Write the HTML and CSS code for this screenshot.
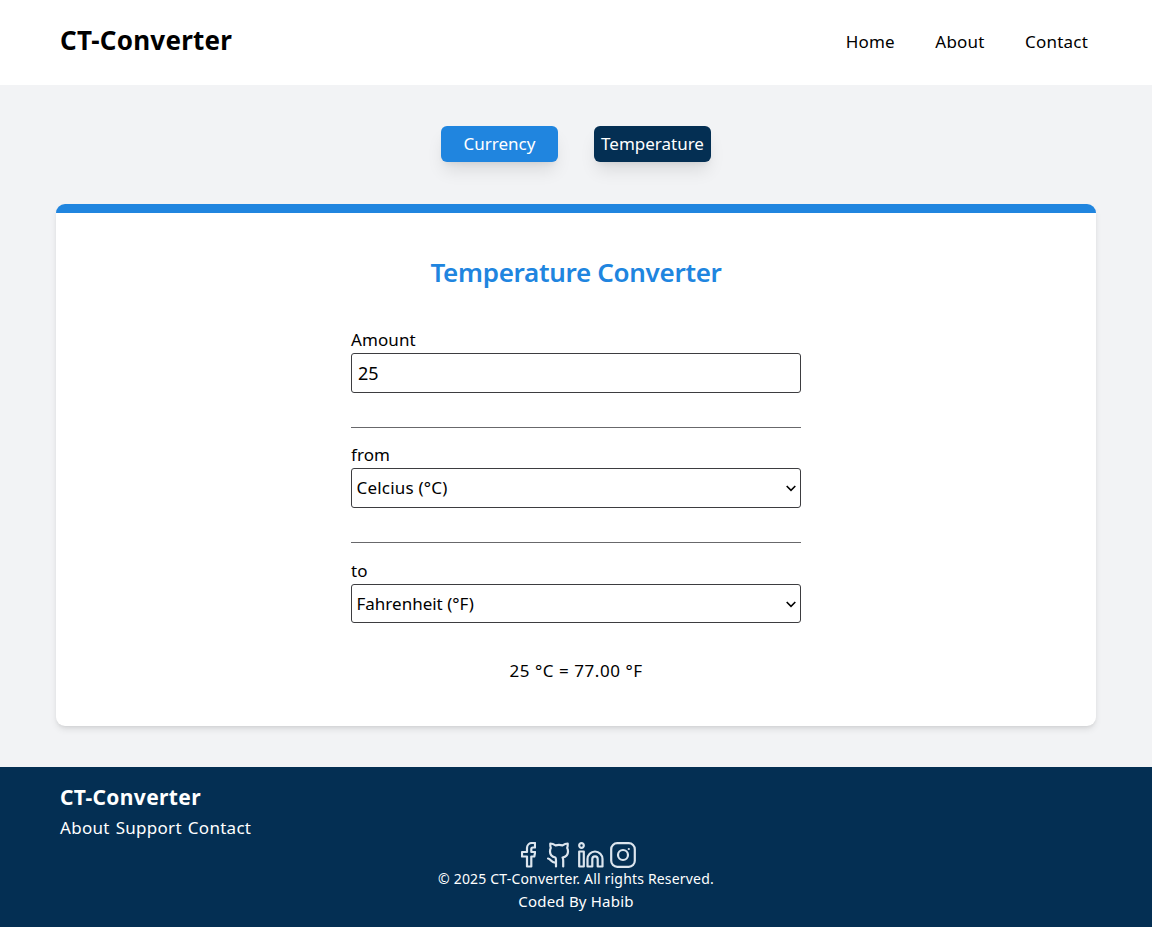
FILE: index.html
```html
<!DOCTYPE html>
<html lang="en">
<head>
<meta charset="utf-8">
<title>CT-Converter</title>
<link rel="stylesheet" href="styles.css">
</head>
<body>
<header class="header">
  <h1 class="brand">CT-Converter</h1>
  <nav class="nav"><a>Home</a><a>About</a><a>Contact</a></nav>
</header>
<main class="main">
  <div class="tabs">
    <button class="tab">Currency</button>
    <button class="tab tab-active">Temperature</button>
  </div>
  <section class="card">
    <h2 class="title">Temperature Converter</h2>
    <form class="form">
      <label class="label" for="amount">Amount</label>
      <input class="field input" id="amount" value="25">
      <hr class="rule">
      <label class="label" for="from">from</label>
      <div class="select-wrap">
        <select class="field select select-from" id="from"><option>Celcius (°C)</option></select>
        <svg class="chevron" viewBox="0 0 10 7"><path d="M0.7 1 5 5.3 9.3 1"/></svg>
      </div>
      <hr class="rule rule-last">
      <label class="label" for="to">to</label>
      <div class="select-wrap">
        <select class="field select" id="to"><option>Fahrenheit (°F)</option></select>
        <svg class="chevron" viewBox="0 0 10 7"><path d="M0.7 1 5 5.3 9.3 1"/></svg>
      </div>
    </form>
    <p class="result">25 °C = 77.00 °F</p>
  </section>
</main>
<footer class="footer">
  <h3 class="footer-brand">CT-Converter</h3>
  <div class="footer-links"><a>About</a><a>Support</a><a>Contact</a></div>
  <div class="social">
    <svg width="15" height="26" viewBox="0 0 15 26"><path d="M14 1h-3a5 5 0 0 0-5 5v4H1v4.500h5v10h4.300v-10h3l.9-4.500h-3.900V7c0-1 .5-1.500 1.500-1.500H14z"/></svg>
    <svg class="github" width="23" height="26" viewBox="0 0 23 26"><path d="M9 24.500v-6c0-1.500-.1-2.200-.6-3C4.800 14.800 3 12.500 3 9.500c0-1.500.2-2.500.8-3.500C3.300 4.300 3.200 2.800 3.300 1.500c1.700 0 3.700.8 5.200 1.800a17 17 0 0 1 7 0C17 2.300 19 1.500 20.700 1.500c.1 1.300 0 2.800-.5 4.500.6 1 .8 2 .8 3.500 0 3-1.800 5.300-5.400 6 .4.800.6 1.500.6 3v6M9 20.500c-5 .8-4.500-3.200-8-4"/></svg>
    <svg class="linkedin" width="26" height="26" viewBox="0 0 26 26"><path d="M1.200 9.500h4.600v15H1.200zM9.500 24.500v-7.500a7.500 7.500 0 0 1 15 0v7.500h-4.800V17a2.700 2.700 0 0 0-5.400 0v7.500z"/><circle cx="3.500" cy="3.500" r="2.300"/></svg>
    <svg class="instagram" width="26" height="26" viewBox="0 0 26 26"><rect x="1.200" y="1.200" width="23.600" height="23.600" rx="6"/><circle cx="13" cy="13" r="5"/><path d="M18.800 7h.01"/></svg>
  </div>
  <p class="copyright">© 2025 CT-Converter. All rights Reserved.</p>
  <p class="credit">Coded By Habib</p>
</footer>
</body>
</html>
```
FILE: styles.css
```css
* { box-sizing: border-box; margin: 0; }
body { font: 17px/27px "Noto Sans", sans-serif; color: #000; background: #f2f3f5; min-height: 927px; display: flex; flex-direction: column; }
.header { height: 85px; padding: 0 64px 0 60px; background: #fff; display: flex; justify-content: space-between; align-items: center; }
.brand { font-size: 26px; font-weight: 700; letter-spacing: 0.25px; padding-bottom: 4px; }
.nav { display: flex; gap: 40.500px; letter-spacing: 0.200px; padding-bottom: 2px; }
.main { height: 682px; padding: 41px 56px; }
.tabs { display: flex; justify-content: center; gap: 36px; height: 36px; }
.tab { width: 117px; padding: 0; border: 0; border-radius: 6px; background: #2085df; color: #fff; font: 17px/36px "Noto Sans", sans-serif; box-shadow: 0 11px 17px -3px #0000001a, 0 4px 7px -4px #0000001a; }
.tab-active { background: #042f53; }
.card { margin-top: 42px; height: 522px; border-top: 9px solid #2085df; border-radius: 9px; background: #fff; box-shadow: 0 4px 7px -1px #0000001a, 0 2px 4px -2px #0000001a; text-align: center; padding-top: 39px; }
.title { color: #2085df; font-size: 26px; line-height: 40px; font-weight: 600; letter-spacing: -0.300px; }
.form { width: 450px; margin: 35px auto 0; text-align: left; display: flex; flex-direction: column; }
.label { line-height: 26px; letter-spacing: 0.100px; }
.field { display: block; width: 100%; height: 40px; border: 1px solid #3d3d40; border-radius: 3px; background: #fff; color: #000; font: 17px "Noto Sans", sans-serif; padding: 0 6px; }
.input { font-size: 18px; }
.select { appearance: none; padding: 0 4.5px; height: 39px; }
.select-from { height: 40px; letter-spacing: 0.200px; padding-bottom: 2px; }
.select-wrap { position: relative; }
.chevron { position: absolute; right: 5px; top: 17px; width: 10px; height: 7px; fill: none; stroke: #000; stroke-width: 1.600; }
.rule { width: 100%; height: 1px; border: 0; background: #68686b; margin: 33.500px 0 14.500px; }
.rule-last { margin-bottom: 15.500px; }
.result { margin-top: 34px; letter-spacing: 0.550px; }
.footer { height: 160px; background: #042f53; color: #fff; padding: 15px 60px; text-align: center; }
.footer-brand { text-align: left; font-size: 21px; line-height: 30px; font-weight: 700; letter-spacing: 0.350px; }
.footer-links { display: flex; gap: 6px; line-height: 30px; letter-spacing: 0.280px; padding-top: 1px; }
.social { display: flex; justify-content: center; gap: 6px; height: 25px; margin: -1px 0 0 5px; }
.social svg { flex: none; fill: none; stroke: #dce5ee; stroke-width: 2.200; stroke-linecap: round; stroke-linejoin: round; }
.social .github { margin-left: 5px; }
.social .linkedin { margin-left: 2px; }
.copyright { font-size: 14px; line-height: 23px; letter-spacing: 0.180px; }
.credit { font-size: 15px; line-height: 23px; letter-spacing: 0.200px; }
```
